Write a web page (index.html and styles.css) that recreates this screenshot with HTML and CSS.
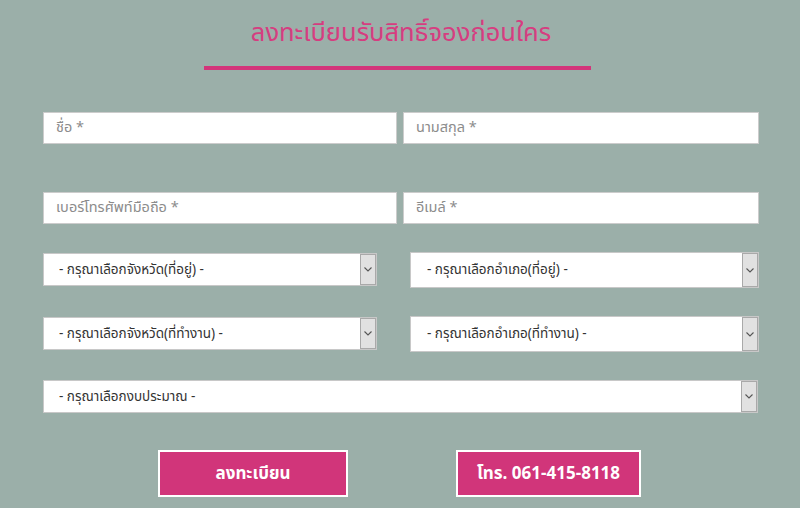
FILE: index.html
```html
<!DOCTYPE html>
<html lang="th">
<head>
    <meta charset="UTF-8">
    <meta name="viewport" content="width=device-width, initial-scale=1.0">
    <title>ลงทะเบียนรับสิทธิ์จองก่อนใคร</title>
    <link rel="stylesheet" href="styles.css">
</head>
<body>
    <div class="register">
        <div class="header">
            <h1>ลงทะเบียนรับสิทธิ์จองก่อนใคร</h1>
            <div class="line"></div>
        </div>

        <form class="reg-form" onsubmit="return false;">
            <div class="row-inputs">
                <input type="text" class="field" placeholder="ชื่อ *">
                <input type="text" class="field field-right" placeholder="นามสกุล *">
            </div>
            <div class="row-inputs row-gap">
                <input type="tel" class="field" placeholder="เบอร์โทรศัพท์มือถือ *">
                <input type="email" class="field field-right" placeholder="อีเมล์ *">
            </div>

            <div class="row-selects">
                <div class="select-box sel-left">
                    <select><option>- กรุณาเลือกจังหวัด(ที่อยู่) -</option></select>
                    <span class="arrow"><svg width="8" height="5" viewBox="0 0 8 5"><path d="M0.5 0.5 L4 4 L7.5 0.5" fill="none" stroke="#555" stroke-width="1.1"/></svg></span>
                </div>
                <div class="select-box sel-right">
                    <select><option>- กรุณาเลือกอำเภอ(ที่อยู่) -</option></select>
                    <span class="arrow"><svg width="8" height="5" viewBox="0 0 8 5"><path d="M0.5 0.5 L4 4 L7.5 0.5" fill="none" stroke="#555" stroke-width="1.1"/></svg></span>
                </div>
            </div>
            <div class="row-selects">
                <div class="select-box sel-left">
                    <select><option>- กรุณาเลือกจังหวัด(ที่ทำงาน) -</option></select>
                    <span class="arrow"><svg width="8" height="5" viewBox="0 0 8 5"><path d="M0.5 0.5 L4 4 L7.5 0.5" fill="none" stroke="#555" stroke-width="1.1"/></svg></span>
                </div>
                <div class="select-box sel-right">
                    <select><option>- กรุณาเลือกอำเภอ(ที่ทำงาน) -</option></select>
                    <span class="arrow"><svg width="8" height="5" viewBox="0 0 8 5"><path d="M0.5 0.5 L4 4 L7.5 0.5" fill="none" stroke="#555" stroke-width="1.1"/></svg></span>
                </div>
            </div>
            <div class="select-box sel-full">
                <select><option>- กรุณาเลือกงบประมาณ -</option></select>
                <span class="arrow"><svg width="8" height="5" viewBox="0 0 8 5"><path d="M0.5 0.5 L4 4 L7.5 0.5" fill="none" stroke="#555" stroke-width="1.1"/></svg></span>
            </div>

            <div class="buttons">
                <button class="btn btn-reg" type="submit">ลงทะเบียน</button>
                <button class="btn btn-call" type="button">โทร. 061-415-8118</button>
            </div>
        </form>
    </div>
</body>
</html>
```

FILE: styles.css
```css
* {
    margin: 0;
    padding: 0;
    box-sizing: border-box;
}

body {
    font-family: "Noto Sans Thai", "Noto Sans", "Liberation Sans", sans-serif;
    background: #9bafa9;
    color: #333;
    height: 508px;
    overflow: hidden;
}

.register {
    width: 716px;
    margin-left: 43px;
}

.header h1 {
    margin-top: 15px;
    height: 36px;
    line-height: 36px;
    font-size: 25.5px;
    font-weight: normal;
    color: #d63d80;
    text-align: center;
}

.line {
    width: 387px;
    height: 4px;
    margin: 15px 0 0 161px;
    background: #d3347a;
}

.row-inputs {
    display: grid;
    grid-template-columns: 354px 356px;
    column-gap: 6px;
    margin-top: 42px;
}

.row-gap {
    margin-top: 48px;
}

.field {
    height: 32px;
    border: 1px solid #ccc;
    background: #fff;
    padding: 0 12px;
    font-family: inherit;
    font-size: 14.5px;
    color: #333;
    outline: none;
}

.field::placeholder {
    color: #8c8c8c;
}

.row-selects {
    display: flex;
    align-items: flex-start;
    margin-top: 28px;
}

.select-box {
    display: flex;
    background: #fff;
    border: 1px solid #c8c8c8;
}

.select-box select {
    flex: 1;
    appearance: none;
    -webkit-appearance: none;
    border: none;
    background: transparent;
    font-family: inherit;
    font-size: 13.5px;
    color: #333;
    padding-left: 15px;
    outline: none;
}

.arrow {
    width: 16px;
    display: flex;
    align-items: center;
    justify-content: center;
    background: #e1e1e1;
    border: 1px solid #a9a9a9;
}

.sel-left {
    width: 334px;
    height: 33px;
    margin-top: 1px;
}

.sel-right {
    width: 349px;
    height: 36px;
    margin-left: 33px;
}

.sel-right select {
    padding-left: 16px;
}

.sel-full {
    width: 715px;
    height: 33px;
    margin-top: 28px;
}

.buttons {
    display: flex;
    gap: 108px;
    padding-left: 115px;
    margin-top: 37px;
}

.btn {
    height: 47px;
    background: #d1357a;
    border: 2px solid #fff;
    color: #fff;
    font-family: inherit;
    font-size: 17px;
    font-weight: bold;
    cursor: pointer;
}

.btn-reg {
    width: 190px;
}

.btn-call {
    width: 185px;
}
```
